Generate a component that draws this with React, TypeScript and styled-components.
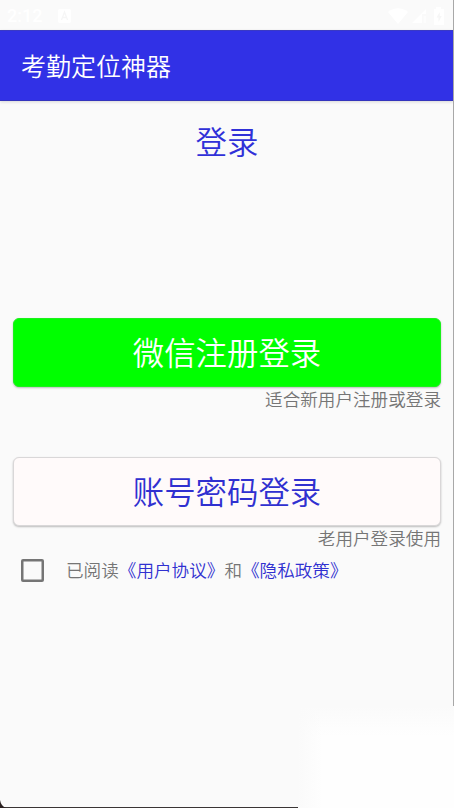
import React from "react";
import styled, { createGlobalStyle } from "styled-components";

const GlobalStyle = createGlobalStyle`
  * { box-sizing: border-box; }
  html, body { margin: 0; padding: 0; background: #fafafa; }
  body { font-family: Roboto, "Noto Sans CJK SC", sans-serif; font-weight: 350; }
`;

const Screen = styled.div`
  position: relative;
  width: 454px;
  height: 808px;
  overflow: hidden;
  display: flex;
  flex-direction: column;
  background: #fafafa;
`;

const StatusBar = styled.div`
  height: 30px;
  flex: none;
  display: flex;
  align-items: center;
  justify-content: space-between;
  padding: 1px 7px 0 7px;
  color: #fff;
`;

const StatusGroup = styled.div<{ $gap: number }>`
  display: flex;
  align-items: center;
  gap: ${(p) => p.$gap}px;
`;

const Clock = styled.span`
  font-size: 18px;
  line-height: 20px;
  font-weight: 500;
`;

const AppBar = styled.header`
  height: 71px;
  flex: none;
  display: flex;
  align-items: center;
  padding: 5px 21px 0;
  background: #3131e6;
  border-top: 1px solid #3a3ac4;
  border-bottom: 1px solid #3434bd;
  box-shadow: 0 1px 3px rgba(0, 0, 0, 0.14);
  color: #fff;
  font-size: 25px;
  line-height: 36px;
`;

const Content = styled.main`
  flex: 1;
  display: flex;
  flex-direction: column;
  padding: 0 13px;
`;

const Heading = styled.h1`
  margin: 20px 0 0;
  height: 46px;
  font-size: 31.5px;
  line-height: 46px;
  font-weight: inherit;
  text-align: center;
  color: #3030d8;
`;

const LoginButton = styled.button<{ $variant: "green" | "plain" }>`
  width: 100%;
  height: 69px;
  flex: none;
  padding: 5px 0 0;
  border: 1px solid ${(p) => (p.$variant === "green" ? "#1cf01c" : "#d9d7d8")};
  border-radius: 6px;
  background: ${(p) => (p.$variant === "green" ? "#00ff00" : "#fffafa")};
  color: ${(p) => (p.$variant === "green" ? "#ffffff" : "#3030d0")};
  box-shadow: 0 1px 2px rgba(0, 0, 0, 0.25);
  font-family: inherit;
  font-weight: inherit;
  font-size: 31.4px;
  line-height: 46px;
`;

const LoginOption = styled.section<{ $top: number }>`
  margin-top: ${(p) => p.$top}px;
`;

const Hint = styled.p`
  margin: 0;
  height: 26px;
  font-size: 17.6px;
  line-height: 27px;
  color: #757575;
  text-align: right;
`;

const Agreement = styled.label`
  display: flex;
  align-items: center;
  height: 37px;
  padding-left: 8px;
  gap: 21px;
  font-size: 17.6px;
  line-height: 26px;
  color: #757575;
  white-space: nowrap;
`;

const AgreementText = styled.span`
  padding-top: 1px;
`;

const Checkbox = styled.input`
  appearance: none;
  width: 23px;
  height: 23px;
  margin: 0 1px 0 0;
  flex: none;
  border: 2px solid #757575;
  box-shadow: inset 0 0 0 0.5px #757575;
  border-radius: 2px;
`;

const Link = styled.span`
  color: #3030d0;
`;

const EdgeLine = styled.div`
  position: absolute;
  top: 0;
  right: 0;
  width: 1px;
  height: 706px;
  background: #a8a8a8;
`;

const BottomEdge = styled.div`
  position: absolute;
  left: 0;
  bottom: 0;
  width: 298px;
  height: 1px;
  background: #3a3535;
`;

const Corner = styled.svg`
  position: absolute;
  left: 0;
  bottom: 0;
`;

const Glow = styled.div`
  position: absolute;
  right: 0;
  bottom: 0;
  width: 156px;
  height: 102px;
  background:
    linear-gradient(to right, #fafafa, rgba(250, 250, 250, 0) 24px),
    linear-gradient(to bottom, #fafafa, #fefefe 30px);
`;

export default function App() {
  return (
    <Screen>
      <GlobalStyle />
      <StatusBar>
        <StatusGroup $gap={16}>
          <Clock>2:12</Clock>
          <svg width="13" height="14" viewBox="0 0 13 14">
            <rect width="13" height="14" rx="2" fill="#fff" />
            <path d="M3.5 11 6.5 3l3 8M4.5 8.5h4" fill="none" stroke="#f6f6f6" strokeWidth="1.3" />
          </svg>
        </StatusGroup>
        <StatusGroup $gap={4}>
          <svg width="20" height="16" viewBox="0 0 20 16">
            <path d="M0 4C6-1 14-1 20 4L10 16Z" fill="#fff" />
          </svg>
          <svg width="14" height="15" viewBox="0 0 14 15">
            <path d="M0 15 14 1v5h-4v9Z" fill="#fff" />
            <path d="M11.5 8h2.5v7h-2.5Z" fill="#fdfdfd" />
          </svg>
          <svg width="17" height="18" viewBox="0 0 17 18">
            <path d="M6 0h5v2h3v16H4V2h2Z" fill="#fff" />
            <path d="M9.8 5 6.5 10.5h2V15l3.2-6h-2Z" fill="#f6f6f6" />
          </svg>
        </StatusGroup>
      </StatusBar>
      <AppBar>考勤定位神器</AppBar>
      <Content>
        <Heading>登录</Heading>
        <LoginOption $top={151}>
          <LoginButton $variant="green">微信注册登录</LoginButton>
          <Hint>适合新用户注册或登录</Hint>
        </LoginOption>
        <LoginOption $top={44}>
          <LoginButton $variant="plain">账号密码登录</LoginButton>
          <Hint>老用户登录使用</Hint>
        </LoginOption>
        <Agreement>
          <Checkbox type="checkbox" />
          <AgreementText>
            已阅读<Link>《用户协议》</Link>和<Link>《隐私政策》</Link>
          </AgreementText>
        </Agreement>
      </Content>
      <EdgeLine />
      <Glow />
      <BottomEdge />
      <Corner width="6" height="8" viewBox="0 0 6 8">
        <path d="M0 0Q1 6 6 8H0Z" fill="#2a2020" />
      </Corner>
    </Screen>
  );
}
